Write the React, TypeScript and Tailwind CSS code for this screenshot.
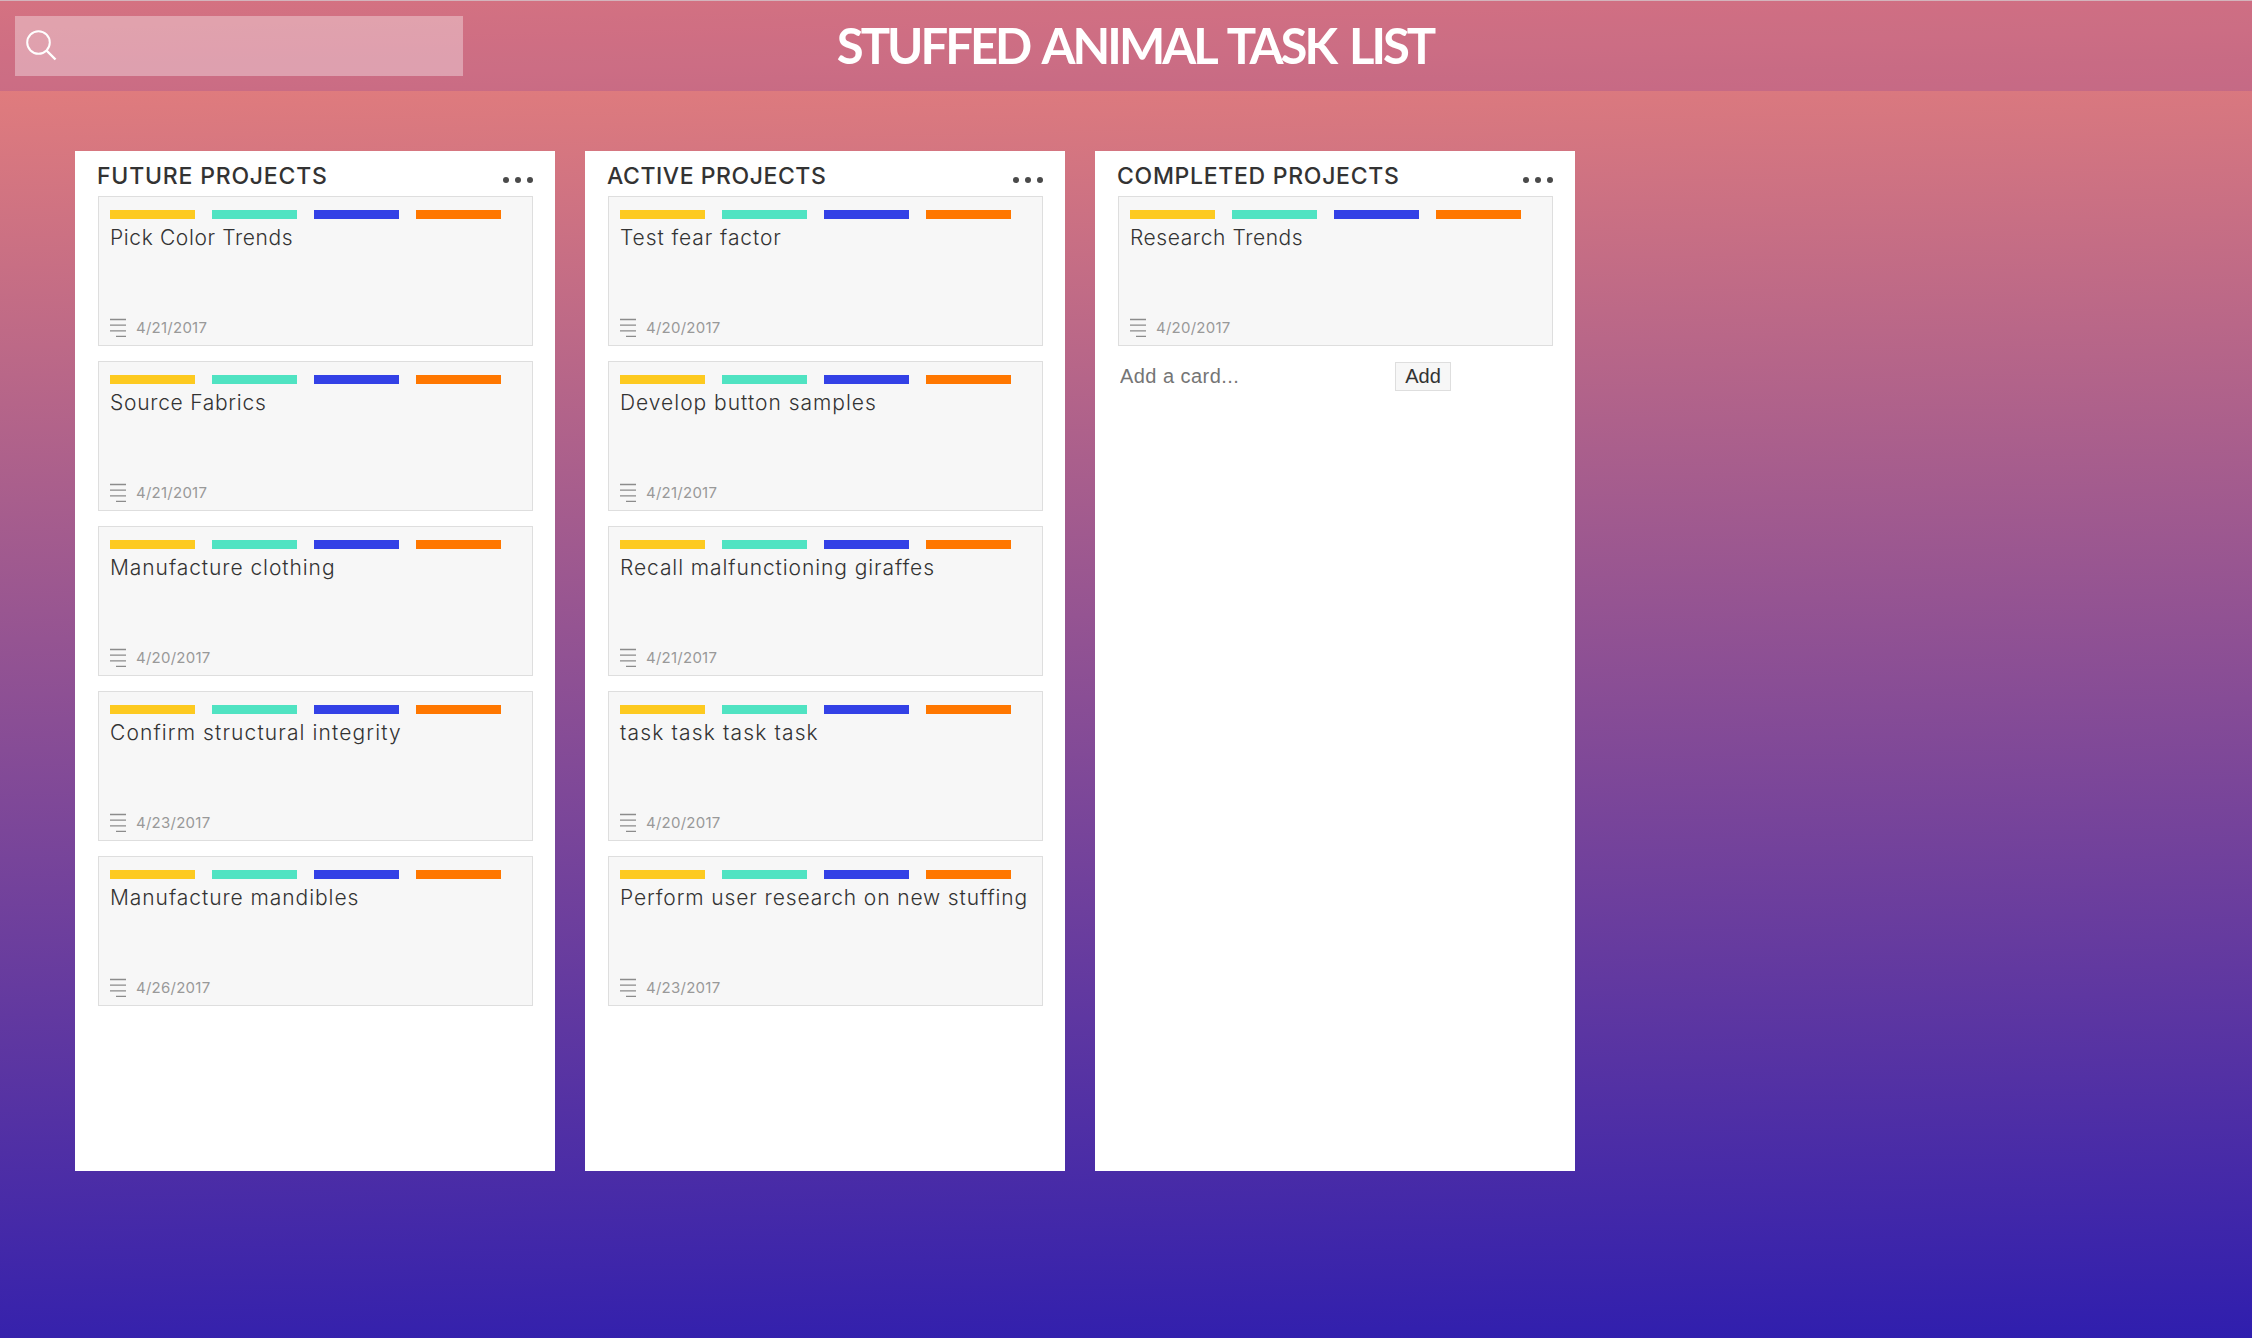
type Card = { title: string; date: string; tracking: string };
type Column = { name: string; tracking: string; cards: Card[]; form?: boolean };

const columns: Column[] = [
  {
    name: "FUTURE PROJECTS",
    tracking: "tracking-[0.8px]",
    cards: [
      { title: "Pick Color Trends", date: "4/21/2017", tracking: "tracking-[0.62px]" },
      { title: "Source Fabrics", date: "4/21/2017", tracking: "tracking-[0.72px]" },
      { title: "Manufacture clothing", date: "4/20/2017", tracking: "tracking-[0.93px]" },
      { title: "Confirm structural integrity", date: "4/23/2017", tracking: "tracking-[1.11px]" },
      { title: "Manufacture mandibles", date: "4/26/2017", tracking: "tracking-[0.94px]" },
    ],
  },
  {
    name: "ACTIVE PROJECTS",
    tracking: "tracking-[0.55px]",
    cards: [
      { title: "Test fear factor", date: "4/20/2017", tracking: "tracking-[0.91px]" },
      { title: "Develop button samples", date: "4/21/2017", tracking: "tracking-[0.99px]" },
      { title: "Recall malfunctioning giraffes", date: "4/21/2017", tracking: "tracking-[0.91px]" },
      { title: "task task task task", date: "4/20/2017", tracking: "tracking-[1.14px]" },
      { title: "Perform user research on new stuffing", date: "4/23/2017", tracking: "tracking-[0.88px]" },
    ],
  },
  {
    name: "COMPLETED PROJECTS",
    tracking: "tracking-[0.7px]",
    cards: [{ title: "Research Trends", date: "4/20/2017", tracking: "tracking-[0.58px]" }],
    form: true,
  },
];

function TaskCard({ card }: { card: Card }) {
  return (
    <article className="flex h-[150px] flex-col border border-[#dedede] bg-[#f7f7f7] px-[11px] pt-[13px] pb-[7px]">
      <div className="flex gap-[17px]">
        <span className="h-[9px] w-[85px] bg-[#fdca20]" />
        <span className="h-[9px] w-[85px] bg-[#50e3c2]" />
        <span className="h-[9px] w-[85px] bg-[#3341e6]" />
        <span className="h-[9px] w-[85px] bg-[#ff7700]" />
      </div>
      <h3 className={"mt-[6px] whitespace-nowrap text-[21px] leading-[26px] font-light text-[#333] " + card.tracking}>
        {card.title}
      </h3>
      <div className="mt-auto flex items-center gap-[9px]">
        <svg className="h-[20px] w-[17px]" viewBox="0 0 17 20" fill="none" stroke="#8c8c8c" strokeWidth="1.3">
          <path d="M0 1.5h16M0 7.2h16M0 12.8h16M6 18.3h10" />
        </svg>
        <span className="text-[15px] leading-[18px] tracking-[0.25px] text-[#999]">{card.date}</span>
      </div>
    </article>
  );
}

export default function App() {
  return (
    <div className="h-[1338px] w-[2252px] overflow-hidden bg-[linear-gradient(178.7deg,#ec827a_0%,#2f1eae_100%)] font-['Inter',sans-serif]">
      <header className="grid h-[91px] grid-cols-[448px_1fr_448px] items-center border-t border-[#d3b4bc] bg-[#76329e]/20 px-[15px]">
        <label className="flex h-[60px] items-center bg-white/35 pl-[11px]">
          <svg className="mt-[-2px] h-[31px] w-[31px]" viewBox="0 0 31 31" fill="none" stroke="#fff" strokeWidth="2">
            <circle cx="12.5" cy="12.5" r="11.3" />
            <path d="M20.5 20.5L29.5 29.5" strokeWidth="2.4" />
          </svg>
          <input className="min-w-0 flex-1 outline-none" />
        </label>
        <h1 className="mt-[-2px] ml-[18px] whitespace-nowrap text-center font-['Lato',sans-serif] text-[49px] leading-[60px] font-bold tracking-[-3px] text-white [word-spacing:5px]">STUFFED ANIMAL TASK LIST</h1>
      </header>
      <main className="mt-[60px] ml-[75px] flex gap-[30px]">
        {columns.map((column) => (
          <section key={column.name} className="h-[1020px] w-[480px] bg-white pl-[23px] pr-[22px]">
            <div className="flex h-[45px] items-center justify-between">
              <h2 className={"mt-[5px] ml-[-1px] whitespace-nowrap text-[23px] leading-[28px] font-medium text-[#333] " + column.tracking}>{column.name}</h2>
              <div className="mt-[13px] flex gap-[6px]">
                <span className="size-[6px] rounded-full bg-[#4a4a4a]" />
                <span className="size-[6px] rounded-full bg-[#4a4a4a]" />
                <span className="size-[6px] rounded-full bg-[#4a4a4a]" />
              </div>
            </div>
            <div className="flex flex-col gap-[15px]">
              {column.cards.map((card) => (
                <TaskCard key={card.title} card={card} />
              ))}
            </div>
            {column.form && (
              <form className="mt-4 flex font-['Liberation_Sans',sans-serif] text-[20px] text-[#333]">
                <input className="h-[29px] w-[277px] pb-[2px] pl-[2px] outline-none placeholder:tracking-[0.45px] placeholder:text-[#757575]" placeholder="Add a card..." />
                <button type="button" className="h-[29px] w-[56px] border border-[#dedede] bg-[#f7f7f7] pb-[1px] leading-[26px]">Add</button>
              </form>
            )}
          </section>
        ))}
      </main>
    </div>
  );
}
